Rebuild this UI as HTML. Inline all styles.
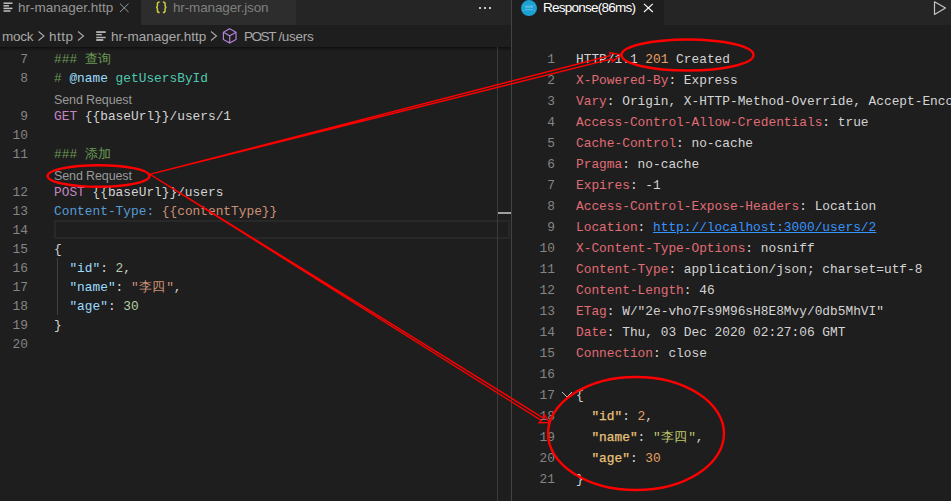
<!DOCTYPE html>
<html><head><meta charset="utf-8">
<style>
*{margin:0;padding:0;box-sizing:border-box}
html,body{width:951px;height:501px;overflow:hidden;background:#1e1e1e}
body{position:relative;font-family:"Liberation Sans",sans-serif}
.abs{position:absolute}
.ui{font-family:"Liberation Sans",sans-serif;font-size:13.5px;white-space:pre}
.mono{font-family:"Liberation Mono",monospace;white-space:pre}
/* left pane */
#ltabs{left:0;top:0;width:511px;height:25px;background:#252526}
#tab1{left:0;top:0;width:141px;height:25px;background:#1e1e1e}
#tab2{left:141px;top:0;width:155px;height:25px;background:#2d2d2d}
#bc{left:0;top:25px;width:511px;height:22px;background:#1e1e1e;color:#a9a9a9}
#ed{left:0;top:47px;width:511px;height:454px;background:#1e1e1e;overflow:hidden}
.shadow{left:0;top:47px;width:511px;height:5px;background:linear-gradient(#0f0f0f,#191919 45%,rgba(30,30,30,0))}
.ln{position:absolute;left:0;width:28px;text-align:right;color:#858585;font-family:"Liberation Mono",monospace;font-size:12.83px;height:19px;line-height:19px}
.cl{position:absolute;left:54px;height:19px;line-height:19px;font-family:"Liberation Mono",monospace;font-size:12.83px;white-space:pre;color:#d4d4d4}
.lens{position:absolute;left:54px;height:19px;line-height:19px;font-family:"Liberation Sans",sans-serif;font-size:12.5px;color:#999999;white-space:pre;letter-spacing:-.12px}
.rln{position:absolute;left:512px;width:43px;text-align:right;color:#858585;font-family:"Liberation Mono",monospace;font-size:12.83px;height:21px;line-height:21px}
.rl{position:absolute;left:576px;height:21px;line-height:21px;font-family:"Liberation Mono",monospace;font-size:12.83px;white-space:pre;color:#d4d4d4}
.cj{letter-spacing:.7px}
.cm{color:#6a9955}.vb{color:#9cdcfe}.ty{color:#4ec9b0}.kw{color:#c586c0}.bl{color:#569cd6}.st{color:#ce9178}.nu{color:#b5cea8}
.hk{color:#e06c75}.hn{color:#e8a065}.jk{color:#e8c27a;-webkit-text-stroke:.25px #e8c27a}.js{color:#bfc66a}.lk{color:#3794ff;text-decoration:underline}
</style></head><body>
<!-- LEFT TAB BAR -->
<div id="ltabs" class="abs"></div>
<div id="tab1" class="abs"></div>
<div id="tab2" class="abs"></div>
<svg class="abs" style="left:0;top:0" width="511" height="25">
  <g stroke="#c0c0c0" stroke-width="1.5">
    <line x1="3.5" y1="3.2" x2="12.5" y2="3.2"/>
    <line x1="3.5" y1="5.8" x2="9" y2="5.8"/>
    <line x1="3.5" y1="8.4" x2="12.5" y2="8.4"/>
    <line x1="3.5" y1="11" x2="10.5" y2="11"/>
  </g>
  <g stroke="#9a9a9a" stroke-width="1">
    <line x1="120" y1="3.7" x2="128.5" y2="12"/>
    <line x1="128.5" y1="3.7" x2="120" y2="12"/>
  </g>
  <g fill="#c5c5c5"><rect x="479" y="7" width="2" height="2"/><rect x="484" y="7" width="2" height="2"/><rect x="489" y="7" width="2" height="2"/></g>
</svg>
<div class="abs ui" style="left:18px;top:0.3px;height:16px;line-height:16px;color:#969696">hr-manager.http</div>
<svg class="abs" style="left:0;top:0" width="300" height="25"><g fill="none" stroke="#cbcb41" stroke-width="1.5">
<path d="M159.6 1.9 Q157.4 1.9 157.4 4 L157.4 6 Q157.4 7.3 156 7.3 Q157.4 7.3 157.4 8.6 L157.4 10.5 Q157.4 12.6 159.6 12.6"/>
<path d="M162.9 1.9 Q165.1 1.9 165.1 4 L165.1 6 Q165.1 7.3 166.5 7.3 Q165.1 7.3 165.1 8.6 L165.1 10.5 Q165.1 12.6 162.9 12.6"/>
</g></svg>
<div class="abs ui" style="left:173px;top:0.3px;height:16px;line-height:16px;color:#7f7f7f;letter-spacing:-.14px">hr-manager.json</div>

<!-- BREADCRUMBS -->
<div id="bc" class="abs"></div>
<div class="abs ui" style="left:2px;top:27.5px;height:18px;line-height:18px;color:#a9a9a9;letter-spacing:-.25px">mock</div>
<div class="abs ui" style="left:49px;top:27.5px;height:18px;line-height:18px;color:#a9a9a9;letter-spacing:.5px">http</div>
<div class="abs ui" style="left:111px;top:27.5px;height:18px;line-height:18px;color:#a9a9a9">hr-manager.http</div>
<div class="abs ui" style="left:244px;top:27.5px;height:18px;line-height:18px;color:#a9a9a9"><span style="letter-spacing:-1.45px">POST</span><span style="letter-spacing:-.3px"> /users</span></div>
<svg class="abs" style="left:0;top:25px" width="511" height="22">
  <g fill="none" stroke="#a9a9a9" stroke-width="1.1">
    <polyline points="38.5,6.5 44,11 38.5,15.5"/>
    <polyline points="78,6.5 83.5,11 78,15.5"/>
    <polyline points="211,6.5 216.5,11 211,15.5"/>
  </g>
  <g stroke="#b8b8b8">
    <line x1="96.2" y1="7.05" x2="105.7" y2="7.05" stroke-width="1.8"/>
    <line x1="96.2" y1="9.65" x2="101.9" y2="9.65" stroke-width="1.4"/>
    <line x1="96.2" y1="12.5" x2="105.7" y2="12.5" stroke-width="1.4"/>
    <line x1="96.2" y1="15" x2="103.3" y2="15" stroke-width="1.8"/>
  </g>
  <g fill="none" stroke="#b180d7" stroke-width="1.2">
    <path d="M229.7 3.8 L236 7.3 L236 14.5 L229.7 18 L223.4 14.5 L223.4 7.3 Z"/>
    <path d="M223.4 7.3 L229.7 10.8 L236 7.3 M229.7 10.8 L229.7 18"/>
  </g>
</svg>

<!-- LEFT EDITOR -->
<div id="ed" class="abs"></div>
<div class="abs shadow"></div>
<!-- current line box -->
<div class="abs" style="left:54px;top:220px;width:456px;height:19px;border:2px solid #282828"></div>
<!-- indent guide -->
<div class="abs" style="left:57px;top:258px;width:1px;height:57px;background:#404040"></div>

<div class="ln" style="top:50px">7</div>
<div class="ln" style="top:69px">8</div>
<div class="ln" style="top:107px">9</div>
<div class="ln" style="top:126px">10</div>
<div class="ln" style="top:145px">11</div>
<div class="ln" style="top:183px">12</div>
<div class="ln" style="top:202px">13</div>
<div class="ln" style="top:221px">14</div>
<div class="ln" style="top:240px">15</div>
<div class="ln" style="top:259px">16</div>
<div class="ln" style="top:278px">17</div>
<div class="ln" style="top:297px">18</div>
<div class="ln" style="top:316px">19</div>
<div class="ln" style="top:335px">20</div>

<div class="cl cm" style="top:50px">### <span class="cj">查询</span></div>
<div class="cl" style="top:69px"><span class="cm">#</span> <span class="vb">@name</span> <span class="ty">getUsersById</span></div>
<div class="lens" style="top:91px">Send Request</div>
<div class="cl" style="top:107px"><span class="kw">GET</span> {{baseUrl}}/users/1</div>
<div class="cl cm" style="top:145px">### <span class="cj">添加</span></div>
<div class="lens" style="top:167px">Send Request</div>
<div class="cl" style="top:183px"><span class="kw">POST</span> {{baseUrl}}/users</div>
<div class="cl" style="top:202px"><span class="bl">Content-Type:</span> <span class="st">{{contentType}}</span></div>
<div class="cl" style="top:240px">{</div>
<div class="cl" style="top:259px">  <span class="vb">"id"</span>: <span class="nu">2</span>,</div>
<div class="cl" style="top:278px">  <span class="vb">"name"</span>: <span class="st">"<span class="cj">李四</span>"</span>,</div>
<div class="cl" style="top:297px">  <span class="vb">"age"</span>: <span class="nu">30</span></div>
<div class="cl" style="top:316px">}</div>

<!-- overview ruler -->
<div class="abs" style="left:497px;top:47px;width:1px;height:454px;background:#3a3a3a"></div>
<div class="abs" style="left:498px;top:212px;width:13px;height:2px;background:#a0a0a0"></div>

<!-- SEPARATOR -->
<div class="abs" style="left:511px;top:0;width:1px;height:501px;background:#444444"></div>

<!-- RIGHT TAB BAR -->
<div class="abs" style="left:512px;top:0;width:439px;height:25px;background:#252526"></div>
<div class="abs" style="left:512px;top:0;width:152px;height:25px;background:#1e1e1e"></div>
<svg class="abs" style="left:512px;top:0" width="439" height="25">
  <circle cx="17" cy="8.1" r="8" fill="#1ba1d4"/>
  <g fill="#ffffff" opacity=".25"><rect x="13" y="5.5" width="8" height="2.3"/><rect x="13" y="9" width="8" height="1.2"/><rect x="11" y="5" width="1" height="1"/><rect x="11" y="10" width="1" height="1"/><rect x="22" y="5" width="1" height="1"/><rect x="22" y="10" width="1" height="1"/></g>
  <g stroke="#ffffff" stroke-width="1.1">
    <line x1="132" y1="3.8" x2="140.8" y2="12"/>
    <line x1="140.8" y1="3.8" x2="132" y2="12"/>
  </g>
  <path d="M422.5 1.8 L433.5 8 L422.5 14.4 Z" fill="none" stroke="#c5c5c5" stroke-width="1.2" stroke-linejoin="round"/>
</svg>
<div class="abs ui" style="left:543px;top:0.3px;height:16px;line-height:16px;color:#ffffff;letter-spacing:-.75px">Response(86ms)</div>

<!-- RIGHT CONTENT -->
<div class="rln" style="top:49px">1</div>
<div class="rln" style="top:70px">2</div>
<div class="rln" style="top:91px">3</div>
<div class="rln" style="top:112px">4</div>
<div class="rln" style="top:133px">5</div>
<div class="rln" style="top:154px">6</div>
<div class="rln" style="top:175px">7</div>
<div class="rln" style="top:196px">8</div>
<div class="rln" style="top:217px">9</div>
<div class="rln" style="top:238px">10</div>
<div class="rln" style="top:259px">11</div>
<div class="rln" style="top:280px">12</div>
<div class="rln" style="top:301px">13</div>
<div class="rln" style="top:322px">14</div>
<div class="rln" style="top:343px">15</div>
<div class="rln" style="top:364px">16</div>
<div class="rln" style="top:385px">17</div>
<div class="rln" style="top:406px">18</div>
<div class="rln" style="top:427px">19</div>
<div class="rln" style="top:448px">20</div>
<div class="rln" style="top:469px">21</div>

<div class="rl" style="top:49px">HTTP/1.1 <span class="hn">201</span> Created</div>
<div class="rl" style="top:70px"><span class="hk">X-Powered-By</span>: Express</div>
<div class="rl" style="top:91px"><span class="hk">Vary</span>: Origin, X-HTTP-Method-Override, Accept-Encoding</div>
<div class="rl" style="top:112px"><span class="hk">Access-Control-Allow-Credentials</span>: true</div>
<div class="rl" style="top:133px"><span class="hk">Cache-Control</span>: no-cache</div>
<div class="rl" style="top:154px"><span class="hk">Pragma</span>: no-cache</div>
<div class="rl" style="top:175px"><span class="hk">Expires</span>: -1</div>
<div class="rl" style="top:196px"><span class="hk">Access-Control-Expose-Headers</span>: Location</div>
<div class="rl" style="top:217px"><span class="hk">Location</span>: <span class="lk">http://localhost:3000/users/2</span></div>
<div class="rl" style="top:238px"><span class="hk">X-Content-Type-Options</span>: nosniff</div>
<div class="rl" style="top:259px"><span class="hk">Content-Type</span>: application/json; charset=utf-8</div>
<div class="rl" style="top:280px"><span class="hk">Content-Length</span>: 46</div>
<div class="rl" style="top:301px"><span class="hk">ETag</span>: W/"2e-vho7Fs9M96sH8E8Mvy/0db5MhVI"</div>
<div class="rl" style="top:322px"><span class="hk">Date</span>: Thu, 03 Dec 2020 02:27:06 GMT</div>
<div class="rl" style="top:343px"><span class="hk">Connection</span>: close</div>
<div class="rl" style="top:385px">{</div>
<div class="rl" style="top:406px">  <span class="jk">"id"</span>: <span class="hn">2</span>,</div>
<div class="rl" style="top:427px">  <span class="jk">"name"</span>: <span class="js">"<span class="cj">李四</span>"</span>,</div>
<div class="rl" style="top:448px">  <span class="jk">"age"</span>: <span class="hn">30</span></div>
<div class="rl" style="top:469px">}</div>
<svg class="abs" style="left:0;top:0" width="951" height="501">
  <polyline points="562,392 567,397 572,392" fill="none" stroke="#c5c5c5" stroke-width="1"/>
</svg>

<!-- ANNOTATIONS -->
<svg class="abs" style="left:0;top:0" width="951" height="501">
  <g fill="none" stroke="#ff0000" stroke-width="2.4">
    <ellipse cx="98.5" cy="176" rx="51" ry="10.8"/>
    <ellipse cx="687.5" cy="55" rx="66" ry="15.5"/>
    <ellipse cx="636" cy="433.5" rx="88" ry="56.5"/>
  </g>
  <g fill="none" stroke="#ff0000" stroke-width="1.4" stroke-linejoin="miter">
    <path d="M149.5 174.4 L610 55.8 L610 52.6 L621.1 54.9 L612.3 61.9 L612 58.8 Z"/>
    <path d="M149.5 174 L544 418.5 L544.3 414.4 L549.3 422.5 L539.2 422.8 L541.3 420.4 Z"/>
  </g>
</svg>
</body></html>
